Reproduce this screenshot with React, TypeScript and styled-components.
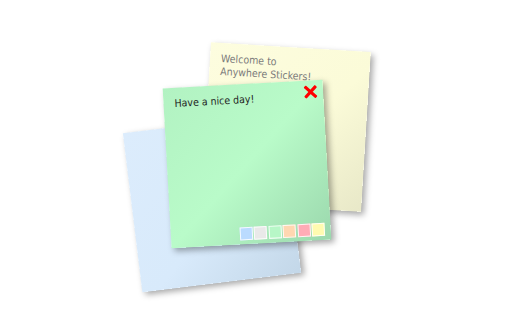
import React from "react";
import styled, { createGlobalStyle } from "styled-components";

const Global = createGlobalStyle`
  html, body { margin: 0; padding: 0; background: #ffffff; }
  body { width: 512px; height: 320px; overflow: hidden; }
`;

const Desk = styled.div`
  position: relative;
  width: 512px;
  height: 320px;
  background: #ffffff;
  font-family: "DejaVu Sans Condensed", "DejaVu Sans", sans-serif;
`;

const Note = styled.div<{ $x: number; $y: number; $angle: number; $bg: string }>`
  position: absolute;
  left: ${(p) => p.$x}px;
  top: ${(p) => p.$y}px;
  width: 160px;
  height: 160px;
  box-sizing: border-box;
  padding: 9px 11px;
  display: flex;
  flex-direction: column;
  transform: rotate(${(p) => p.$angle}deg);
  background: ${(p) => p.$bg};
  box-shadow: 3px 3px 6px rgba(0, 0, 0, 0.35);
`;

const NoteText = styled.div<{ $color: string }>`
  font-size: 10.5px;
  line-height: 12.5px;
  color: ${(p) => p.$color};
  flex: 1;
`;

const CloseButton = styled.div`
  position: absolute;
  top: 5px;
  right: 6px;
  width: 13px;
  height: 13px;
  display: flex;
`;

const Palette = styled.div`
  display: flex;
  gap: 1.5px;
  align-self: flex-end;
  margin-right: -5px;
  margin-bottom: -5px;
`;

const Swatch = styled.div<{ $color: string }>`
  width: 13px;
  height: 13px;
  box-sizing: border-box;
  border: 1px solid rgba(255, 255, 255, 0.85);
  background: ${(p) => p.$color};
`;

const swatches = ["#badbff", "#e9e9e9", "#b7f7c7", "#ffd7b1", "#ffabb6", "#fffbb0"];

export default function App() {
  return (
    <>
      <Global />
      <Desk>
        <Note
          $x={132}
          $y={123}
          $angle={-7}
          $bg="linear-gradient(135deg, #dcecfc 0%, #d8eafb 55%, #c3d7e8 100%)"
        />
        <Note
          $x={206}
          $y={47}
          $angle={3.5}
          $bg="linear-gradient(135deg, #fdfddf 0%, #fbfbd8 55%, #e8e8c8 100%)"
        >
          <NoteText $color="#7a7a7a">
            Welcome to
            <br />
            Anywhere Stickers!
          </NoteText>
        </Note>
        <Note
          $x={167}
          $y={84}
          $angle={-3.2}
          $bg="linear-gradient(135deg, #b2f2c2 0%, #b9fbc9 50%, #9bd8ad 100%)"
        >
          <NoteText $color="#1e1e1e">Have a nice day!</NoteText>
          <CloseButton>
            <svg width="13" height="13" viewBox="0 0 13 13">
              <path d="M2 2 L11 11 M11 2 L2 11" stroke="#ff0000" strokeWidth="3.2" strokeLinecap="square" />
            </svg>
          </CloseButton>
          <Palette>
            {swatches.map((c) => (
              <Swatch key={c} $color={c} />
            ))}
          </Palette>
        </Note>
      </Desk>
    </>
  );
}
